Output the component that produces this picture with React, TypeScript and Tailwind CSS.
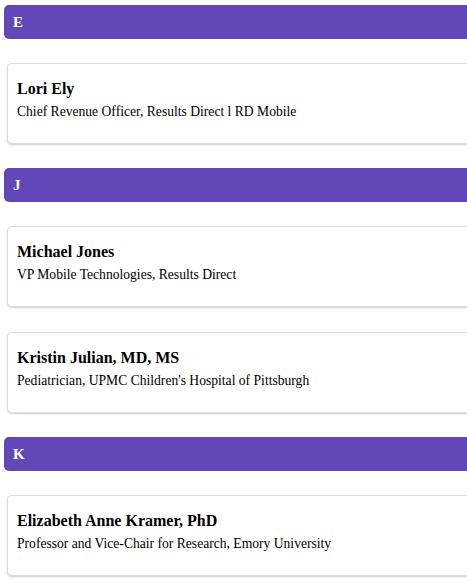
import React from 'react';

const groups = [
  {
    letter: 'E',
    people: [{ name: 'Lori Ely', title: 'Chief Revenue Officer, Results Direct l RD Mobile' }],
  },
  {
    letter: 'J',
    people: [
      { name: 'Michael Jones', title: 'VP Mobile Technologies, Results Direct' },
      { name: 'Kristin Julian, MD, MS', title: "Pediatrician, UPMC Children's Hospital of Pittsburgh" },
    ],
  },
  {
    letter: 'K',
    people: [
      { name: 'Elizabeth Anne Kramer, PhD', title: 'Professor and Vice-Chair for Research, Emory University' },
    ],
  },
];

function PersonCard({ name, title }: { name: string; title: string }) {
  return (
    <div className="ml-[3px] rounded-l-[5px] border border-r-0 border-[#d6dde7] bg-white pl-[9px] pt-[16px] pb-[22px] shadow-[0_1px_2px_rgba(100,116,139,0.35)]">
      <h3 className="text-[16px] font-bold leading-[18px] text-black">{name}</h3>
      <p className="mt-[5px] text-[13.6px] leading-[18px] text-black">{title}</p>
    </div>
  );
}

export default function App() {
  return (
    <div className="w-full overflow-hidden bg-white font-['Liberation_Serif','Times_New_Roman',serif]">
      <div className="w-[520px] pt-[5px] pl-[4px] pb-[10px]">
        {groups.map((group, gi) => (
          <section key={group.letter} className={gi > 0 ? 'mt-[24px]' : ''}>
            {/* Letter header */}
            <div className="flex h-[34px] items-center rounded-l-[5px] bg-[#6247b8] pl-[9px] text-[15px] font-bold text-white">
              {group.letter}
            </div>
            <div className="mt-[24px] flex flex-col gap-[25px]">
              {group.people.map((p) => (
                <PersonCard key={p.name} name={p.name} title={p.title} />
              ))}
            </div>
          </section>
        ))}
      </div>
    </div>
  );
}
